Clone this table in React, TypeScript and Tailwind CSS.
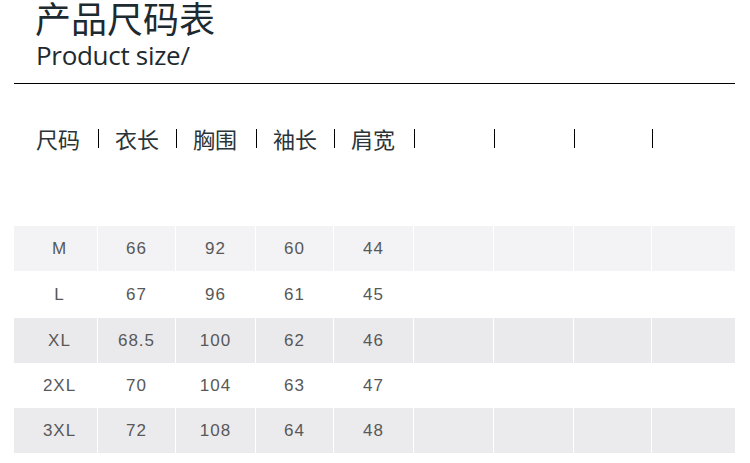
import React from "react";

const headers = ["尺码", "衣长", "胸围", "袖长", "肩宽", "", "", ""];
const headWidths = ["w-[62px]", "w-[77px] pl-[16px]", "w-[79px] pl-[16px]", "w-[77px] pl-[16px]", "w-[79px] pl-[16px]", "w-[79px]", "w-[79px]", "w-[77px]"];
const rows = [
  ["M", "66", "92", "60", "44"],
  ["L", "67", "96", "61", "45"],
  ["XL", "68.5", "100", "62", "46"],
  ["2XL", "70", "104", "63", "47"],
  ["3XL", "72", "108", "64", "48"],
];
const widths = ["w-[83px] pl-[8px]", "w-[77px]", "w-[79px]", "w-[77px]", "w-[79px]", "w-[79px]", "w-[79px]", "w-[77px]", "w-[83px]"];
const rowCls = [
  "h-[45px] bg-[#f3f3f5]",
  "h-[47px] bg-white",
  "h-[45px] bg-[#eaeaed]",
  "h-[45px] bg-white",
  "h-[45px] bg-[#ebebee]",
];

export default function App() {
  return (
    <div className="w-[750px] h-[463px] bg-white overflow-hidden font-['Noto_Sans_CJK_SC',sans-serif]">
      <div className="pl-[35px] text-[36px] leading-[34px] text-[#1d2a30]">产品尺码表</div>
      <div className="pl-[36px] mt-[5px] text-[26px] leading-[32px] text-[#1d2a30] tracking-[-0.3px] font-['Open_Sans',sans-serif]">
        Product size/
      </div>
      <div className="ml-[14px] mt-[12px] w-[721px] h-[1px] bg-black" />
      <div className="flex items-center mt-[41px] h-[26px] pl-[36px] text-[22px] leading-[26px] text-[#2a3438]">
        {headWidths.map((w, i) => (
          <React.Fragment key={i}>
            <div className={`shrink-0 whitespace-nowrap ${w}`}>{headers[i]}</div>
            <div className="shrink-0 w-[1px] h-[19px] bg-black" />
          </React.Fragment>
        ))}
      </div>
      <div className="mt-[75px] ml-[14px] flex flex-col font-['Liberation_Sans',Arial,sans-serif]">
        {rows.map((r, ri) => (
          <div key={ri} className={`flex gap-[1px] bg-white ${rowCls[ri].split(" ")[0]}`}>
            {widths.map((w, ci) => (
              <div
                key={ci}
                className={`${rowCls[ri]} ${w} shrink-0 flex items-center justify-center text-[17px] tracking-[1px] text-[#585858]`}
              >
                {r[ci] ?? ""}
              </div>
            ))}
          </div>
        ))}
      </div>
    </div>
  );
}
